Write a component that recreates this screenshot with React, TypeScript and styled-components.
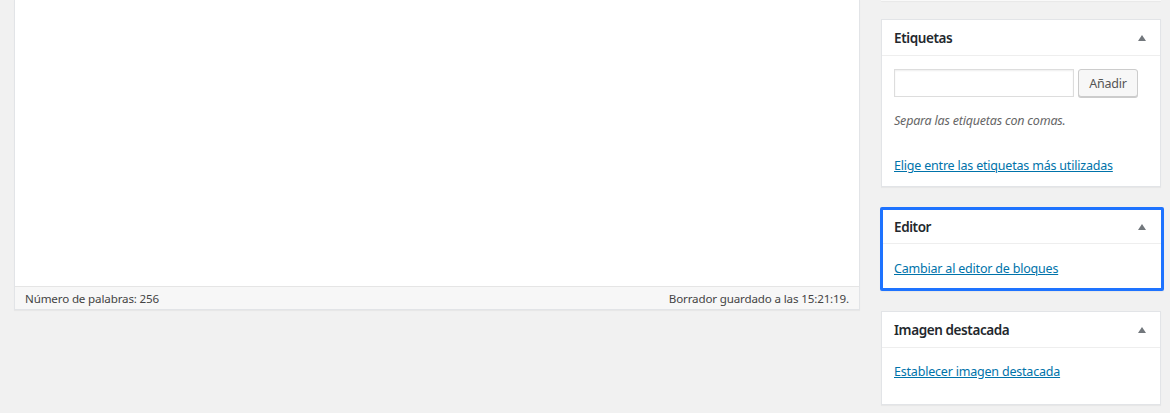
import styled, { createGlobalStyle } from 'styled-components';

const GlobalStyle = createGlobalStyle`
	html, body {
		margin: 0;
		padding: 0;
		background: #f1f1f1;
	}
	body {
		font-family: 'Noto Sans', 'Open Sans', sans-serif;
		font-size: 12.5px;
		letter-spacing: -0.2px;
		color: #444;
	}
`;

const Page = styled.div`
	display: flex;
	align-items: flex-start;
	gap: 21px;
	padding: 0 9px 0 14px;
	height: 413px;
	overflow: hidden;
`;

const EditorColumn = styled.div`
	width: 846px;
	flex: none;
	box-sizing: border-box;
	border: 1px solid #e2e4e7;
	border-top: none;
	background: #fff;
	box-shadow: 0 1px 1px rgba(0, 0, 0, 0.04);
`;

const EditorArea = styled.div`
	height: 286px;
	background: #fff;
`;

const StatusBar = styled.div`
	display: flex;
	justify-content: space-between;
	align-items: center;
	height: 22px;
	padding: 0 10px;
	background: #f7f7f7;
	border-top: 1px solid #e5e5e5;
	font-size: 11.6px;
	letter-spacing: -0.15px;
	color: #444;
`;

const Sidebar = styled.div`
	width: 280px;
	flex: none;
	display: flex;
	flex-direction: column;
	gap: 20px;
`;

const PrevEdge = styled.div`
	height: 1px;
	margin-bottom: -2px;
	background: #f9f9f9;
	box-shadow: 0 1px 1px rgba(0, 0, 0, 0.04);
`;

const Box = styled.div<{ $active?: boolean }>`
	box-sizing: border-box;
	background: #fff;
	border: ${(p) => (p.$active ? '3px solid #1e73ff' : '1px solid #e2e4e7')};
	border-radius: ${(p) => (p.$active ? '2px' : '0')};
	margin: ${(p) => (p.$active ? '0 -3px 0 -1px' : '0')};
	box-shadow: 0 1px 1px rgba(0, 0, 0, 0.04);
`;

const BoxHeader = styled.div<{ $active?: boolean }>`
	display: flex;
	align-items: center;
	justify-content: space-between;
	height: ${(p) => (p.$active ? '33px' : '35px')};
	padding: ${(p) => (p.$active ? '0 15px 0 11px' : '0 14px 0 12px')};
	border-bottom: 1px solid #eee;
	font-size: 13.5px;
	letter-spacing: -0.4px;
	font-weight: 600;
	color: #23282d;
`;

const Toggle = styled.span`
	width: 0;
	height: 0;
	border-left: 4px solid transparent;
	border-right: 4px solid transparent;
	border-bottom: 6px solid #72777c;
`;

const BoxBody = styled.div<{ $active?: boolean }>`
	padding: ${(p) => (p.$active ? '0 11px' : '0 12px')};
`;

const TagRow = styled.div`
	display: flex;
	gap: 4px;
	margin-top: 13px;
`;

const TagInput = styled.input`
	box-sizing: border-box;
	width: 180px;
	height: 28px;
	border: 1px solid #ddd;
	box-shadow: inset 0 1px 2px rgba(0, 0, 0, 0.07);
	outline: none;
	padding: 0 6px;
	font-family: inherit;
	font-size: 14px;
`;

const Button = styled.button`
	box-sizing: border-box;
	width: 60px;
	height: 28px;
	padding: 0;
	background: #f7f7f7;
	border: 1px solid #ccc;
	border-radius: 3px;
	box-shadow: 0 1px 0 #ccc;
	color: #555;
	font-family: inherit;
	font-size: 12.5px;
	letter-spacing: -0.2px;
`;

const Hint = styled.p`
	margin: 15px 0 0;
	font-style: italic;
	color: #666;
	line-height: 18px;
`;

const Link = styled.a<{ $top: number; $bottom: number }>`
	display: block;
	width: fit-content;
	margin: ${(p) => `${p.$top}px 0 ${p.$bottom}px`};
	line-height: 18px;
	color: #0073aa;
	text-decoration: underline;
`;

export default function App() {
	return (
		<>
			<GlobalStyle />
			<Page>
				<EditorColumn>
					<EditorArea />
					<StatusBar>
						<span>Número de palabras: 256</span>
						<span>Borrador guardado a las 15:21:19.</span>
					</StatusBar>
				</EditorColumn>
				<Sidebar>
					<PrevEdge />
					<Box>
						<BoxHeader>
							<span>Etiquetas</span>
							<Toggle />
						</BoxHeader>
						<BoxBody>
							<TagRow>
								<TagInput type="text" />
								<Button>Añadir</Button>
							</TagRow>
							<Hint>Separa las etiquetas con comas.</Hint>
							<Link href="#" $top={27} $bottom={11}>
								Elige entre las etiquetas más utilizadas
							</Link>
						</BoxBody>
					</Box>
					<Box $active>
						<BoxHeader $active>
							<span>Editor</span>
							<Toggle />
						</BoxHeader>
						<BoxBody $active>
							<Link href="#" $top={16} $bottom={10}>
								Cambiar al editor de bloques
							</Link>
						</BoxBody>
					</Box>
					<Box>
						<BoxHeader>
							<span>Imagen destacada</span>
							<Toggle />
						</BoxHeader>
						<BoxBody>
							<Link href="#" $top={15} $bottom={23}>
								Establecer imagen destacada
							</Link>
						</BoxBody>
					</Box>
				</Sidebar>
			</Page>
		</>
	);
}
